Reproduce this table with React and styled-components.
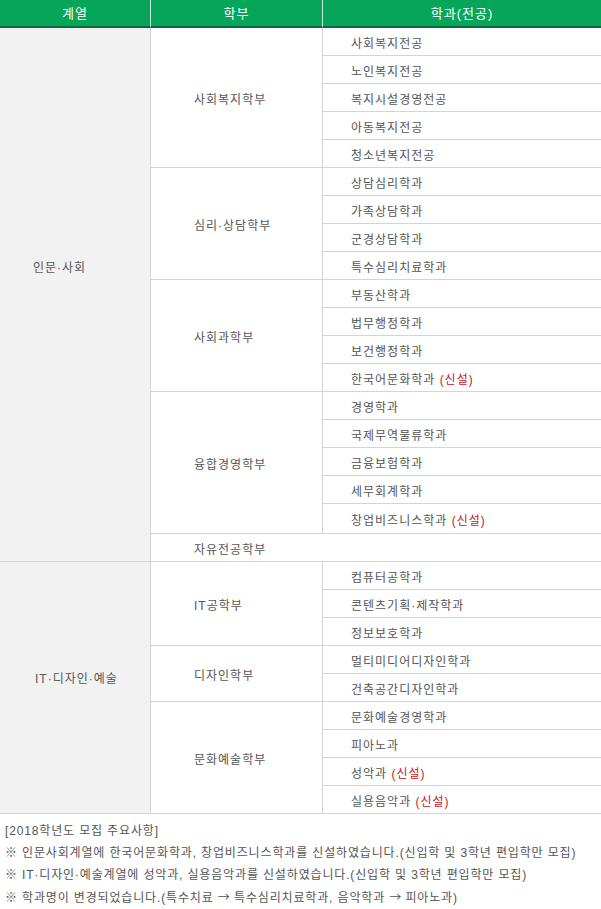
import React from "react";
import styled, { createGlobalStyle } from "styled-components";

const Global = createGlobalStyle`
  html, body { margin: 0; padding: 0; background: #fff; }
  body { font-family: "Liberation Sans", "Noto Sans CJK KR", sans-serif; }
`;

const Wrap = styled.div`
  width: 601px;
`;

const Grid = styled.div`
  display: grid;
  grid-template-columns: 150px 172px 279px;
  grid-auto-rows: auto;
  font-size: 12px;
  letter-spacing: 1px;
  color: #555;
`;

const Th = styled.div`
  box-sizing: border-box;
  height: 28px;
  display: flex;
  align-items: center;
  justify-content: center;
  padding-bottom: 2px;
  background: #06a65a;
  color: #fff;
  font-size: 13px;
  border-bottom: 2px solid #0a6b3c;
  border-left: ${(p) => (p.$first ? "none" : "1px solid #c9eed9")};
`;

const Cell = styled.div`
  box-sizing: border-box;
  min-height: ${(p) => p.$h || 28}px;
  display: flex;
  align-items: center;
  padding: 1px 0 ${(p) => p.$lift || 0}px ${(p) => p.$pad || 0}px;
  border-bottom: 1px solid #d4d4d4;
  border-left: ${(p) => (p.$first ? "none" : "1px solid #d4d4d4")};
  background: ${(p) => (p.$gray ? "#f2f2f2" : "#fff")};
  white-space: nowrap;
  grid-row: span ${(p) => p.$rows || 1};
  grid-column: span ${(p) => p.$cols || 1};
`;

const New = styled.span`
  color: #c8171e;
`;

const Arrow = styled.span`
  font-family: "Noto Sans CJK KR", sans-serif;
  letter-spacing: 0;
`;

const Notes = styled.div`
  padding: 6px 0 0 5px;
  font-size: 12px;
  letter-spacing: 0.85px;
  line-height: 22px;
  color: #555;
`;

const data = [
  {
    group: "인문·사회",
    pad: 33,
    lift: 58,
    divisions: [
      { name: "사회복지학부", majors: ["사회복지전공", "노인복지전공", "복지시설경영전공", "아동복지전공", "청소년복지전공"] },
      { name: "심리·상담학부", majors: ["상담심리학과", "가족상담학과", "군경상담학과", "특수심리치료학과"] },
      { name: "사회과학부", majors: ["부동산학과", "법무행정학과", "보건행정학과", { n: "한국어문화학과", isNew: true }] },
      {
        name: "융합경영학부",
        majors: ["경영학과", "국제무역물류학과", "금융보험학과", "세무회계학과", { n: "창업비즈니스학과", isNew: true, h: 30 }],
      },
      { name: "자유전공학부", majors: [] },
    ],
  },
  {
    group: "IT·디자인·예술",
    pad: 35,
    lift: 21,
    divisions: [
      { name: "IT공학부", majors: ["컴퓨터공학과", "콘텐츠기획·제작학과", "정보보호학과"] },
      { name: "디자인학부", majors: ["멀티미디어디자인학과", "건축공간디자인학과"] },
      { name: "문화예술학부", majors: ["문화예술경영학과", "피아노과", { n: "성악과", isNew: true }, { n: "실용음악과", isNew: true }] },
    ],
  },
];

function Major({ m }) {
  if (typeof m === "string") {
    return <Cell $pad={28}>{m}</Cell>;
  }
  return (
    <Cell $pad={28} $h={m.h}>
      {m.n}&nbsp;<New>(신설)</New>
    </Cell>
  );
}

export default function App() {
  const cells = [];
  data.forEach((g, gi) => {
    const groupSpan = g.divisions.reduce((s, d) => s + Math.max(1, d.majors.length), 0);
    cells.push(
      <Cell key={`g${gi}`} $first $gray $pad={g.pad} $lift={g.lift} $rows={groupSpan}>
        {g.group}
      </Cell>
    );
    g.divisions.forEach((d, di) => {
      if (d.majors.length === 0) {
        cells.push(
          <Cell key={`d${gi}-${di}`} $pad={43} $cols={2}>
            {d.name}
          </Cell>
        );
        return;
      }
      cells.push(
        <Cell key={`d${gi}-${di}`} $pad={43} $rows={d.majors.length}>
          {d.name}
        </Cell>
      );
      d.majors.forEach((m, mi) => cells.push(<Major key={`m${gi}-${di}-${mi}`} m={m} />));
    });
  });

  return (
    <Wrap>
      <Global />
      <Grid>
        <Th $first>계열</Th>
        <Th>학부</Th>
        <Th>학과(전공)</Th>
        {cells}
      </Grid>
      <Notes>
        <div>[2018학년도 모집 주요사항]</div>
        <div>※ 인문사회계열에 한국어문화학과, 창업비즈니스학과를 신설하였습니다.(신입학 및 3학년 편입학만 모집)</div>
        <div>※ IT·디자인·예술계열에 성악과, 실용음악과를 신설하였습니다.(신입학 및 3학년 편입학만 모집)</div>
        <div>
          ※ 학과명이 변경되었습니다.(특수치료 <Arrow>→</Arrow> 특수심리치료학과, 음악학과 <Arrow>→</Arrow> 피아노과)
        </div>
      </Notes>
    </Wrap>
  );
}
